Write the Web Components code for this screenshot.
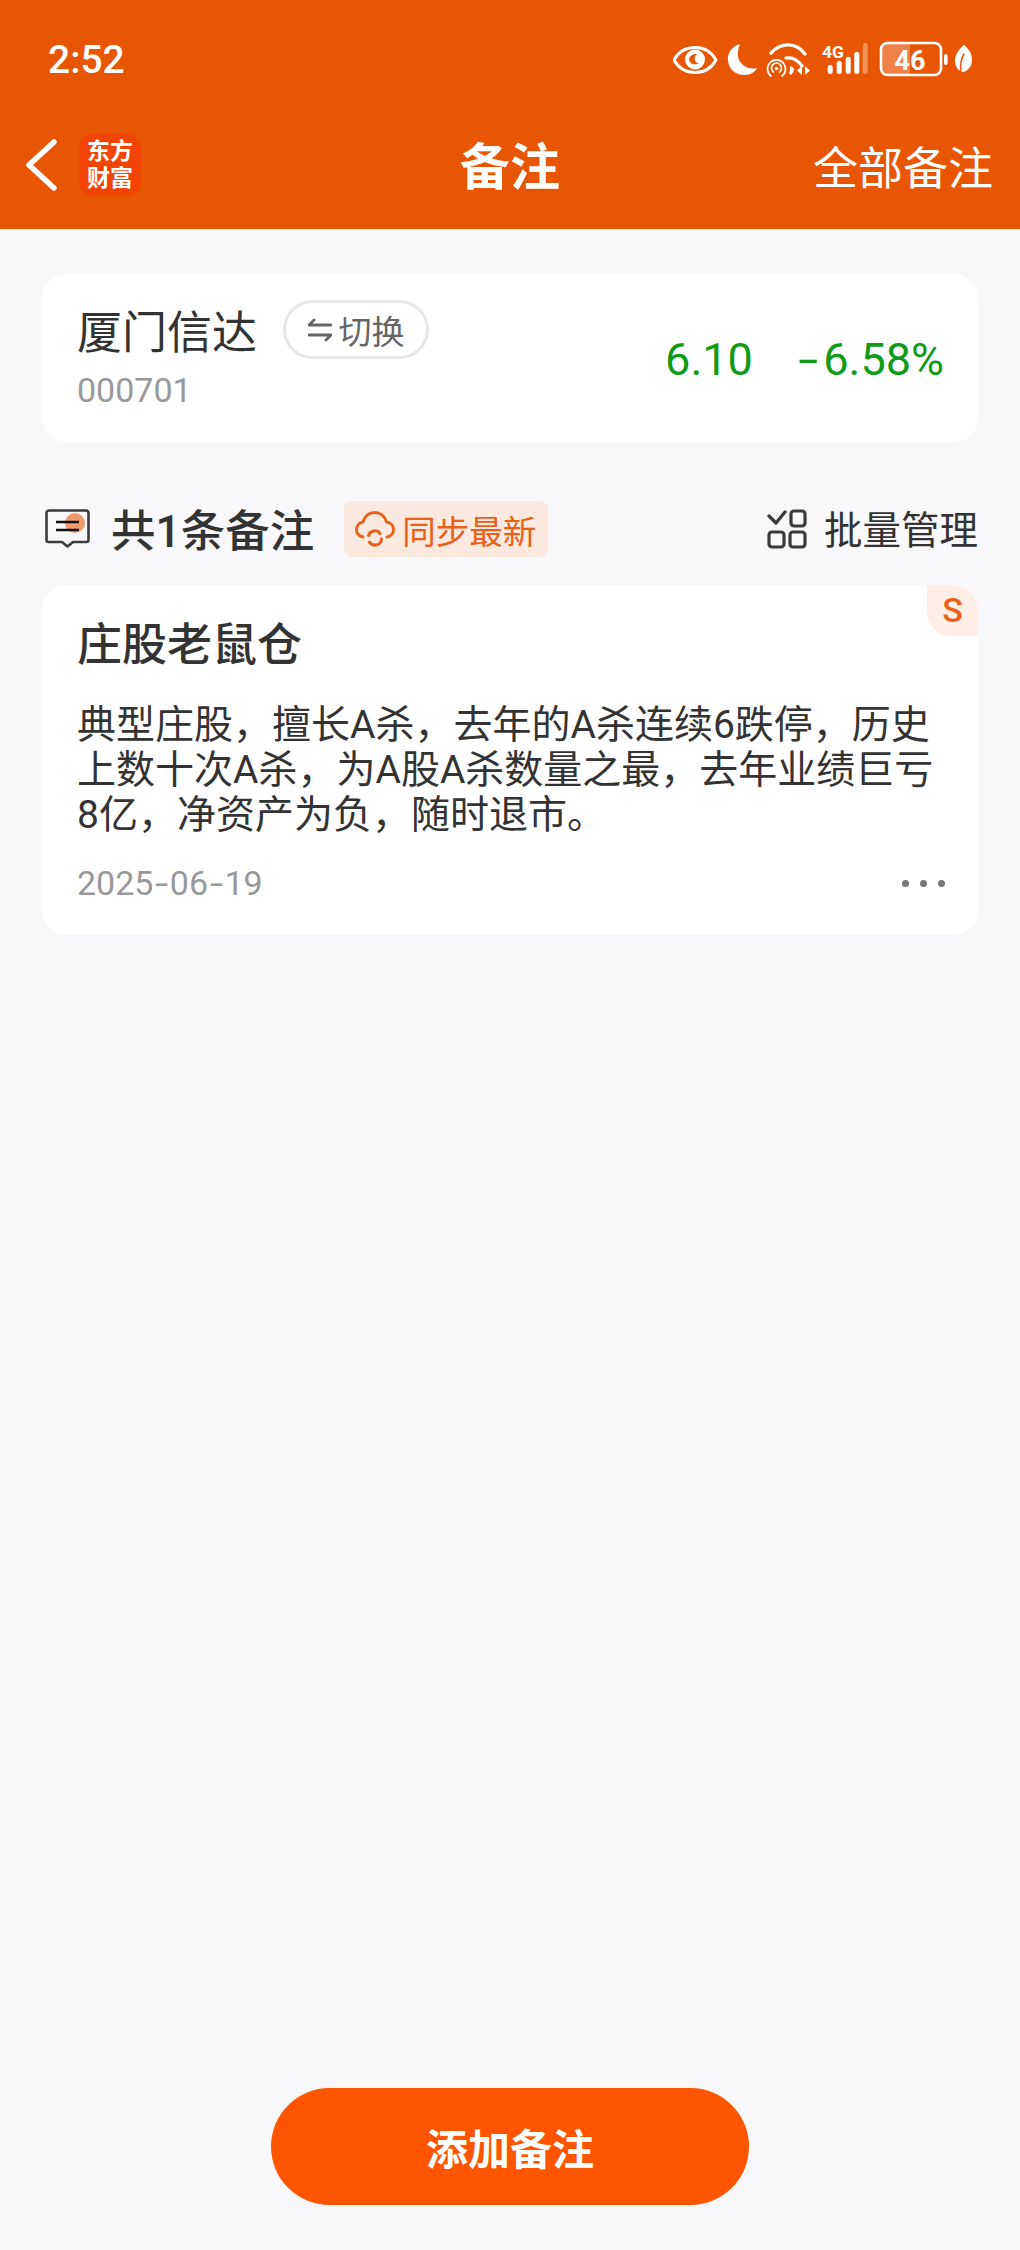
<!DOCTYPE html>
<html lang="zh">
<head>
<meta charset="utf-8">
<title>备注</title>
<style>
    html, body {
        margin: 0;
        padding: 0;
        background: #f8f8fb;
        font-family: Roboto, "Noto Sans CJK SC", sans-serif;
        color: #333;
    }
</style>
</head>
<body>
<notes-page>
    <app-header slot="header"></app-header>
    <stock-card name="厦门信达" code="000701" price="6.10" change="-6.58%"></stock-card>
    <notes-toolbar count="1"></notes-toolbar>
    <note-card title="庄股老鼠仓" date="2025-06-19">典型庄股，擅长A杀，去年的A杀连续6跌停，历史上数十次A杀，为A股A杀数量之最，去年业绩巨亏8亿，净资产为负，随时退市。</note-card>
    <add-button slot="footer">添加备注</add-button>
</notes-page>

<script>
// the hyphen in the screenshot's font is wider than Roboto's, so stretch it a bit
function spacedHyphens(text) {
    return text.replace(/-/g, '<span class="hy">-</span>');
}

class NotesPage extends HTMLElement {
    constructor() {
        super();
        this.attachShadow({ mode: 'open' }).innerHTML = `
<style>
    :host {
        display: flex;
        flex-direction: column;
        height: 2250px;
        overflow: hidden;
        background: #f8f8fb;
    }
    main {
        flex: 1;
        padding: 45px 42px 0;
    }
    footer {
        display: flex;
        justify-content: center;
        padding-bottom: 45px;
    }
</style>
<slot name="header"></slot>
<main><slot></slot></main>
<footer><slot name="footer"></slot></footer>`;
    }
}

class StatusIcons extends HTMLElement {
    constructor() {
        super();
        this.attachShadow({ mode: 'open' }).innerHTML = `
<style>
    :host { display: block; width: 320px; height: 50px; }
    svg { display: block; }
    text { font-family: Roboto, sans-serif; fill: #fff; }
</style>
<svg width="320" height="50" viewBox="0 0 320 50" fill="none">
    <!-- eye -->
    <path d="M1 25C6 16 13 12.500 22 12.500S38 16 43 25c-5 9-12 12.500-21 12.500S6 34 1 25z" stroke="#fff" stroke-width="3" stroke-linejoin="round"/>
    <circle cx="22" cy="24.500" r="10" fill="#fff"/>
    <path d="M16 25c1 4 6 6 10 3-3 0-5-2-4-6 0-1 1-2 2-3-4-.5-8 2-8 6z" fill="#e85604"/>
    <!-- moon -->
    <path d="M67 9c-8 2-13 9-12 17 1 9 9 15 18 14 5-.6 9-3 11-7-8 2-15-2-18-8-2-5-1-11 1-16z" fill="#fff"/>
    <!-- wifi -->
    <path d="M98 18c10-11 25-11 34 1" stroke="#fff" stroke-width="3.400" stroke-linecap="round"/>
    <path d="M113 23c6-1 12 2 16 8" stroke="#fff" stroke-width="3.200" stroke-linecap="round"/>
    <path d="M98 41a9 9 0 1 1 11 0" stroke="#fff" stroke-width="1.700" stroke-linecap="round"/>
    <path d="M100.500 37a5 5 0 1 1 6 0" stroke="#fff" stroke-width="1.700" stroke-linecap="round"/>
    <circle cx="103.500" cy="33.500" r="1.800" fill="#fff"/>
    <path d="M117 31l4 2c0 3-1 5-3 7l-2-2c1-2 1-4 1-7z" fill="#fff"/>
    <path d="M129 31l-5 4.500 5 4.500zM132 31l5 4.500-5 4.500z" fill="#fff"/>
    <!-- 4G and signal -->
    <text x="149" y="22.500" font-size="17" font-weight="700" textLength="22" lengthAdjust="spacingAndGlyphs">4G</text>
    <rect x="154.700" y="30" width="5" height="9" rx="2.500" fill="#fff"/>
    <rect x="163.700" y="25.700" width="5" height="13.300" rx="2.500" fill="#fff"/>
    <rect x="172.700" y="21.700" width="5" height="17.300" rx="2.500" fill="#fff"/>
    <rect x="181.300" y="16.700" width="5" height="22.300" rx="2.500" fill="#fff"/>
    <rect x="189.700" y="8" width="5" height="31" rx="2.500" fill="#fff" opacity=".35"/>
    <!-- battery -->
    <path d="M213 9h24v30h-24a5 5 0 0 1-5-5V14a5 5 0 0 1 5-5z" fill="#ef8148"/>
    <rect x="208" y="8" width="60" height="32" rx="6.500" stroke="#fff" stroke-width="2.600"/>
    <text x="237" y="34.500" font-size="27" font-weight="700" text-anchor="middle">46</text>
    <rect x="271" y="19" width="3.600" height="11" rx="1.800" fill="#fff"/>
    <!-- leaf -->
    <path d="M291 10c5 4 8 9 8 15 0 6-4 11-9 12-5-1-8-6-8-11 0-6 4-12 9-16z" fill="#fff"/>
    <path d="M288 37c-1-7 0-13 3-18" stroke="#e85604" stroke-width="1.500" stroke-linecap="round"/>
</svg>`;
    }
}

class AppHeader extends HTMLElement {
    constructor() {
        super();
        this.attachShadow({ mode: 'open' }).innerHTML = `
<style>
    :host {
        display: block;
        height: 229px;
        background: #e85604;
        color: #fff;
    }
    .status {
        height: 120px;
        display: flex;
        align-items: center;
        justify-content: space-between;
        padding: 0 27px 0 48px;
        box-sizing: border-box;
    }
    .time {
        font-size: 39px;
        font-weight: 500;
    }
    nav {
        position: relative;
        height: 90px;
        display: flex;
        align-items: center;
        padding: 0 27px 0 25px;
    }
    .logo {
        width: 62px;
        height: 62px;
        margin-left: 22px;
        border-radius: 14px;
        background: #f24405;
        display: flex;
        flex-direction: column;
        align-items: center;
        justify-content: center;
        font-size: 23px;
        line-height: 27px;
        font-weight: 700;
    }
    h1 {
        position: absolute;
        left: 0;
        right: 0;
        top: 3px;
        margin: 0;
        text-align: center;
        font-size: 50px;
        font-weight: 700;
        line-height: 90px;
    }
    .all {
        margin-left: auto;
        font-size: 45px;
        position: relative;
    }
</style>
<div class="status">
    <span class="time">2:52</span>
    <status-icons></status-icons>
</div>
<nav>
    <svg width="32" height="52" viewBox="0 0 32 52" fill="none">
        <path d="M29 3L4 26l25 23" stroke="#fff" stroke-width="5.500" stroke-linecap="round" stroke-linejoin="round"/>
    </svg>
    <div class="logo"><span>东方</span><span>财富</span></div>
    <h1>备注</h1>
    <span class="all">全部备注</span>
</nav>`;
    }
}

class StockCard extends HTMLElement {
    constructor() {
        super();
        this.attachShadow({ mode: 'open' }).innerHTML = `
<style>
    :host {
        display: flex;
        align-items: center;
        justify-content: space-between;
        height: 168px;
        box-sizing: border-box;
        padding: 26px 34px 33px 35px;
        background: #fff;
        border-radius: 24px;
    }
    .top {
        display: flex;
        align-items: center;
        gap: 26px;
        height: 60px;
    }
    .name {
        font-size: 45px;
        color: #333;
    }
    .switch {
        box-sizing: border-box;
        width: 146px;
        height: 59px;
        border: 3px solid #e6e6e6;
        border-radius: 30px;
        display: flex;
        align-items: center;
        justify-content: center;
        gap: 7px;
        font-size: 33px;
        color: #666;
    }
    .code {
        margin-top: 10px;
        font-size: 34px;
        line-height: 40px;
        color: #999;
    }
    .quote {
        display: flex;
        gap: 46px;
        font-size: 45px;
        color: #0f9a17;
        position: relative;
        top: 5px;
    }
    .hy {
        display: inline-block;
        transform: scaleX(1.6);
        margin: 0 9px 0 3px;
    }
</style>
<div>
    <div class="top">
        <span class="name"></span>
        <span class="switch">
            <svg width="24" height="24" viewBox="0 0 24 24" fill="none" stroke="#666" stroke-width="2.800" stroke-linecap="round" stroke-linejoin="round">
                <path d="M6 2L1 7h22M1 17h22l-5 5"/>
            </svg>
            <span>切换</span>
        </span>
    </div>
    <div class="code"></div>
</div>
<div class="quote"><span class="price"></span><span class="change"></span></div>`;
    }
    connectedCallback() {
        const root = this.shadowRoot;
        root.querySelector('.name').textContent = this.getAttribute('name');
        root.querySelector('.code').textContent = this.getAttribute('code');
        root.querySelector('.price').textContent = this.getAttribute('price');
        root.querySelector('.change').innerHTML = spacedHyphens(this.getAttribute('change'));
    }
}

class NotesToolbar extends HTMLElement {
    constructor() {
        super();
        this.attachShadow({ mode: 'open' }).innerHTML = `
<style>
    :host {
        display: flex;
        align-items: center;
        height: 56px;
        margin: 59px 0 28px;
        padding: 0 0 0 3px;
    }
    .count {
        margin-left: 21px;
        font-size: 44.500px;
        font-weight: 500;
        color: #333;
    }
    .sync {
        box-sizing: border-box;
        width: 204px;
        height: 56px;
        margin-left: 30px;
        border-radius: 8px;
        background: #fbe9e0;
        display: flex;
        align-items: center;
        gap: 7px;
        padding-left: 11px;
        font-size: 33.500px;
        color: #e8611a;
        white-space: nowrap;
    }
    .batch {
        margin-left: auto;
        display: flex;
        align-items: center;
        gap: 17px;
        font-size: 38.500px;
        color: #333;
    }
    .count, .batch span { position: relative; top: -2px; }
    svg { display: block; flex: none; }
</style>
<svg width="45" height="40" viewBox="0 0 45 40" fill="none">
    <circle cx="30" cy="14" r="10" fill="#f29a6c"/>
    <path d="M4 1.500h37a2.500 2.500 0 0 1 2.500 2.500v27a2 2 0 0 1-2 2H28l-5.500 4.500L17 33H3.500a2 2 0 0 1-2-2V4A2.500 2.500 0 0 1 4 1.500z" stroke="#3c3c3c" stroke-width="2.600" stroke-linejoin="round"/>
    <path d="M11 13h23M11 21h23" stroke="#111" stroke-width="2.600"/>
</svg>
<span class="count"></span>
<span class="sync">
    <svg width="40" height="36" viewBox="0 0 40 36" fill="none" stroke="#e8611a" stroke-width="3" stroke-linecap="round" stroke-linejoin="round">
        <path d="M8 26C4 25 1.500 22 1.500 18.500c0-4 3-7 6.500-7.500C9.500 5.500 14 1.500 19.500 1.500c6 0 10.500 4 12 9.500 4 .5 7 3.500 7 7.500 0 4-3 7-6.500 7.500"/>
        <path d="M13.500 24.500a6.500 6.500 0 0 1 11.500-2M26.500 28a6.500 6.500 0 0 1-12 3"/>
    </svg>
    同步最新
</span>
<span class="batch">
    <svg width="40" height="40" viewBox="0 0 40 40" fill="none" stroke="#3a3a3a" stroke-width="3.200" stroke-linecap="round" stroke-linejoin="round">
        <path d="M2 7l7 7L18 3"/>
        <rect x="24" y="2" width="14" height="15" rx="3"/>
        <rect x="2" y="23" width="15" height="15" rx="3"/>
        <rect x="23" y="23" width="15" height="15" rx="3"/>
    </svg>
    <span>批量管理</span>
</span>`;
    }
    connectedCallback() {
        this.shadowRoot.querySelector('.count').textContent = `共${this.getAttribute('count')}条备注`;
    }
}

class NoteCard extends HTMLElement {
    constructor() {
        super();
        this.attachShadow({ mode: 'open' }).innerHTML = `
<style>
    :host {
        display: block;
        position: relative;
        box-sizing: border-box;
        padding: 31px 35px 32px;
        background: #fff;
        border-radius: 24px;
        overflow: hidden;
    }
    h2 {
        margin: 0;
        font-size: 45px;
        line-height: 60px;
        font-weight: 500;
        color: #333;
    }
    .body {
        margin-top: 27px;
        font-size: 39px;
        line-height: 45px;
        color: #333;
    }
    .foot {
        margin-top: 25px;
        display: flex;
        align-items: center;
        justify-content: space-between;
        height: 40px;
    }
    .date {
        font-size: 34px;
        color: #999;
    }
    .hy {
        display: inline-block;
        transform: scaleX(1.4);
        margin: 0 3.500px;
    }
    .more {
        display: flex;
        gap: 11px;
        margin-right: -2px;
    }
    .more i {
        width: 7px;
        height: 7px;
        border-radius: 50%;
        background: #777;
    }
    .badge {
        position: absolute;
        top: 0;
        right: 0;
        width: 51px;
        height: 51px;
        border-radius: 0 24px 0 24px;
        background: #ffeee6;
        color: #e8611a;
        font-size: 34px;
        font-weight: 500;
        line-height: 51px;
        text-align: center;
    }
</style>
<span class="badge">S</span>
<h2></h2>
<div class="body"><slot></slot></div>
<div class="foot">
    <span class="date"></span>
    <span class="more"><i></i><i></i><i></i></span>
</div>`;
    }
    connectedCallback() {
        this.shadowRoot.querySelector('h2').textContent = this.getAttribute('title');
        this.shadowRoot.querySelector('.date').innerHTML = spacedHyphens(this.getAttribute('date'));
    }
}

class AddButton extends HTMLElement {
    constructor() {
        super();
        this.attachShadow({ mode: 'open' }).innerHTML = `
<style>
    :host {
        display: flex;
        align-items: center;
        justify-content: center;
        width: 478px;
        height: 117px;
        border-radius: 59px;
        background: #ff5500;
        color: #fff;
        font-size: 42px;
        font-weight: 700;
    }
</style>
<slot></slot>`;
    }
}

customElements.define('notes-page', NotesPage);
customElements.define('status-icons', StatusIcons);
customElements.define('app-header', AppHeader);
customElements.define('stock-card', StockCard);
customElements.define('notes-toolbar', NotesToolbar);
customElements.define('note-card', NoteCard);
customElements.define('add-button', AddButton);
</script>
</body>
</html>
